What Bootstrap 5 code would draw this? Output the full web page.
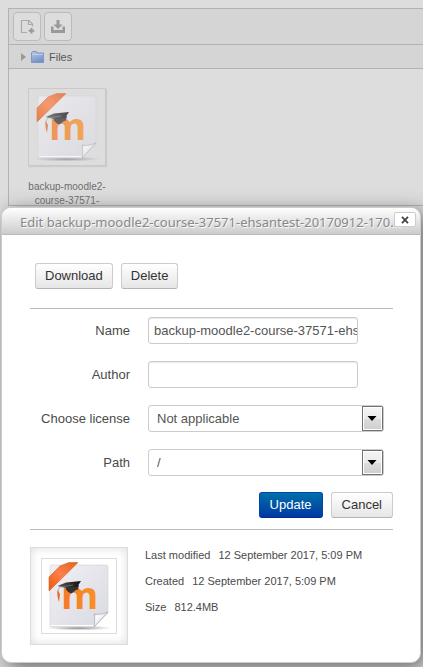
<!DOCTYPE html>
<html lang="en">
<head>
<meta charset="utf-8">
<meta name="viewport" content="width=device-width, initial-scale=1">
<title>Edit file</title>
<link href="https://cdn.jsdelivr.net/npm/bootstrap@5.3.0/dist/css/bootstrap.min.css" rel="stylesheet">
<style>
body{font-family:"Liberation Sans",Arial,sans-serif;font-size:13px;line-height:18px;color:#4a4a4a;background:#ddd}
.fm{margin:8px 0 0 8px;border:1px solid #b2b2b2;border-right:0;color:#6d6d6d}
.fm-bar{background:#d5d5d5;border-bottom:1px solid #b2b2b2}
.fm-tools{padding:3px 4px;gap:3px}
.fm-tool{width:28px;height:29px;padding:0;background:#ddd;border:1px solid #bbb;border-radius:4px;display:flex;align-items:center;justify-content:center}
.fm-path{height:24px;padding-left:12px;gap:5px;font-size:11px}
.fm-path a{color:#555;text-decoration:none}
.fm-files{padding:19px 14px 0;height:136px}
.fm-item{width:88px;font-size:10px;line-height:14px;color:#6d6d6d}
.fm-thumb{width:78px;height:78px;margin-bottom:14px;border:1px solid #c9c9c9;box-shadow:1px 1px 1px #ccc}
.fm-thumb svg{opacity:.72}
.dlg{top:207px;left:1px;right:2px;background:#fff;border:1px solid #ccc;border-radius:10px;box-shadow:5px 5px 20px #666}
.dlg-head{height:27px;padding:0 22px 0 18px;border-bottom:1px solid #bbb;border-radius:9px 9px 0 0;background:linear-gradient(#fff,#ccc)}
.dlg-title{font:400 13px/28px "Noto Sans","Open Sans",sans-serif;color:#888;margin:0;white-space:nowrap;text-shadow:1px 1px 1px #fff}
.dlg-close{top:4px;right:4px;width:22px;height:15px;padding:0;border:1px solid #ccc;border-radius:2px;background:#fff;display:flex;align-items:center;justify-content:center}
.dlg-body{padding:28px 27px 17px 28px}
.top-actions{padding:0 5px 19px}
.btn-ui{font-size:13px;line-height:18px;padding:3px 9px;border:1px solid #ccc;border-bottom-color:#b3b3b3;border-radius:3px;color:#333;background:linear-gradient(#fff,#e6e6e6)}
.form-actions .btn-ui{padding:3px 10px}
.btn-ui:hover{background:#e6e6e6}
.btn-save{color:#fff;border-color:#04a #04a #00308a;background:linear-gradient(#0070a8,#0037a4)}
.btn-save:hover{color:#fff;background:#0037a4}
.rule{height:1px;background:#bbb}
.frm{padding:8px 9px 0 0;display:grid;grid-template-columns:100px minmax(0,1fr);column-gap:18px;row-gap:17px;align-items:center}
.frm label{text-align:right}
.frm .form-control,.frm .form-select{font-size:13px;line-height:18px;height:27px;border:1px solid #ccc;border-radius:3px;color:#555}
.frm .form-control{width:210px;padding:3px 0 3px 5px;box-shadow:inset 0 1px 1px #e8e8e8}
.frm .form-select{padding:3px 26px 3px 8px;background:#fff url("data:image/svg+xml,%3Csvg xmlns='http://www.w3.org/2000/svg' width='21' height='25'%3E%3Cdefs%3E%3ClinearGradient id='g' x2='0' y2='1'%3E%3Cstop stop-color='%23f4f4f4'/%3E%3Cstop offset='.5' stop-color='%23ebebeb'/%3E%3Cstop offset='.51' stop-color='%23ddd'/%3E%3Cstop offset='1' stop-color='%23cfcfcf'/%3E%3C/linearGradient%3E%3C/defs%3E%3Crect x='.5' y='.5' width='20' height='24' fill='%23fff' stroke='%23707070'/%3E%3Crect x='2' y='2' width='17' height='21' fill='url(%23g)'/%3E%3Cpath d='M5.500 10h9l-4.500 5z'/%3E%3C/svg%3E") no-repeat right center;background-size:21px 25px}
.form-actions{padding:16px 0 11px}
.file-info{gap:17px;padding-top:17px}
.info-text{font-size:11px;line-height:16px;gap:10px}
.info-text dt{font-weight:400}
.preview{width:98px;height:98px;padding:10px;border:1px solid #ddd;box-shadow:inset 0 0 10px #ddd;background:#fff}
.preview-frame{width:76px;height:76px;border:1px solid #ddd;background:#fff}
</style>
<script src="https://cdn.jsdelivr.net/npm/bootstrap@5.3.0/dist/js/bootstrap.bundle.min.js"></script>
</head>
<body>
<div class="position-relative min-vh-100 overflow-hidden">
  <svg width="0" height="0" class="position-absolute" aria-hidden="true">
    <defs>
      <linearGradient id="paper" x2="1" y2="1"><stop stop-color="#f0f0f4"/><stop offset="1" stop-color="#d9d9e1"/></linearGradient>
      <linearGradient id="ribbon" x1="0" y1="1" x2="1" y2="0"><stop stop-color="#e8590c"/><stop offset=".5" stop-color="#ff7f4a"/><stop offset="1" stop-color="#e4621a"/></linearGradient>
      <linearGradient id="curl" x2="1" y2="1"><stop stop-color="#bbbbc6"/><stop offset=".25" stop-color="#fff"/><stop offset="1" stop-color="#c2c2cc"/></linearGradient>
      <linearGradient id="cap" x2="1"><stop stop-color="#555"/><stop offset="1" stop-color="#111"/></linearGradient>
      <linearGradient id="orange" x2="1"><stop stop-color="#f4792a"/><stop offset="1" stop-color="#f99325"/></linearGradient>
      <radialGradient id="ground"><stop stop-color="#555" stop-opacity=".7"/><stop offset="1" stop-color="#777" stop-opacity="0"/></radialGradient>
    </defs>
    <symbol id="mbz" viewBox="0 0 74 74">
      <ellipse cx="37" cy="69" rx="33" ry="2.500" fill="url(#ground)"/>
      <path d="M10 6H64q2 0 2 2V54L52 68H10q-2 0-2-2V8q0-2 2-2z" fill="url(#paper)" stroke="#d0d0d8" stroke-width=".6"/>
      <path d="M9 66.500H52" stroke="#fff" stroke-width="1"/>
      <path d="M52 68c1-5 1-9 0-13 5 1 9 0 14-2z" fill="url(#curl)" stroke="#a8a8b2" stroke-width=".7"/>
      <path d="M7 18 18 7 27 3.500H36L7 32z" fill="url(#ribbon)" stroke="#cd6228" stroke-width=".6"/>
      <text x="19" y="50" font-family="Open Sans,sans-serif" font-size="38" font-weight="700" fill="url(#orange)">m</text>
      <path d="M24 28 37 26 36 30.500c-3 0-4 3-7 4q-3-1-5-4z" fill="#333"/>
      <path d="M15.500 27 24 23.500 39 22 35 28 24 29z" fill="url(#cap)"/>
      <path d="M31 26 18 28q-2 1-2 6" fill="none" stroke="#888" stroke-width=".6"/>
      <path d="M15.500 31c-.5 4 0 8 1.500 12l1-8z" fill="#e96a32"/>
    </symbol>
  </svg>

  <main class="fm">
    <div class="fm-bar fm-tools d-flex">
      <button class="fm-tool" type="button" aria-label="Add file">
        <svg width="16" height="16" viewBox="0 0 16 16"><path d="M8 13.500H2.500V1.500H10L13.500 5V7.500M9.500 1.500V5.500H13.500" fill="none" stroke="#aaa" stroke-width="1.200"/><path d="M12.500 9v5.500M9.700 11.700h5.600" stroke="#999" stroke-width="2"/></svg>
      </button>
      <button class="fm-tool" type="button" aria-label="Download all">
        <svg width="16" height="16" viewBox="0 0 16 16" fill="#999"><path d="M6.500 1h3v4.500h3L8 10 3.500 5.500h3z"/><path d="M1 7.500h2.500V11h9V7.500H15V14H1z"/></svg>
      </button>
    </div>
    <nav class="fm-bar fm-path d-flex align-items-center" aria-label="Folder path">
      <svg width="5" height="8" viewBox="0 0 5 8"><path d="M0 0 5 4 0 8z" fill="#999"/></svg>
      <svg width="13" height="12" viewBox="0 0 13 12"><defs><linearGradient id="fold" x2=".4" y2="1"><stop stop-color="#b8c8e6"/><stop offset="1" stop-color="#7693c8"/></linearGradient></defs><path d="M.5 2 1.500.5h4L6.500 2h6v9.500H.5z" fill="url(#fold)" stroke="#7c96c8"/><path d="M1 3.500h11" stroke="#c2d0ea"/></svg>
      <a href="#">Files</a>
    </nav>
    <div class="fm-files">
      <div class="fm-item text-center text-nowrap">
        <div class="fm-thumb mx-auto d-flex align-items-center justify-content-center"><svg width="74" height="74"><use href="#mbz"/></svg></div>
        backup-moodle2-<br>course-37571-
      </div>
    </div>
  </main>

  <section class="dlg position-absolute" role="dialog" aria-labelledby="dlg-title">
    <header class="dlg-head">
      <h1 class="dlg-title" id="dlg-title">Edit backup-moodle2-course-37571-ehsantest-20170912-170...</h1>
      <button class="dlg-close position-absolute" type="button" aria-label="Close"><svg width="8" height="8" viewBox="0 0 8 8"><path d="M1 .8 7 7.200M7 .8 1 7.200" stroke="#444" stroke-width="1.800"/></svg></button>
    </header>
    <form class="dlg-body">
      <div class="top-actions d-flex gap-2">
        <button class="btn btn-ui" type="button">Download</button>
        <button class="btn btn-ui" type="button">Delete</button>
      </div>
      <div class="rule"></div>
      <div class="frm">
        <label for="f-name">Name</label>
        <input class="form-control" id="f-name" type="text" value="backup-moodle2-course-37571-ehsantest-20170912-1709.mbz">
        <label for="f-author">Author</label>
        <input class="form-control" id="f-author" type="text">
        <label for="f-license">Choose license</label>
        <select class="form-select" id="f-license"><option>Not applicable</option></select>
        <label for="f-path">Path</label>
        <select class="form-select" id="f-path"><option>/</option></select>
      </div>
      <div class="form-actions d-flex justify-content-end gap-2">
        <button class="btn btn-ui btn-save" type="button">Update</button>
        <button class="btn btn-ui" type="button">Cancel</button>
      </div>
      <div class="rule"></div>
      <div class="file-info d-flex">
        <div class="preview flex-shrink-0"><div class="preview-frame"><svg class="d-block" width="74" height="74"><use href="#mbz"/></svg></div></div>
        <dl class="info-text d-flex flex-column mb-0">
          <div class="d-flex gap-2"><dt>Last modified</dt><dd class="mb-0">12 September 2017, 5:09 PM</dd></div>
          <div class="d-flex gap-2"><dt>Created</dt><dd class="mb-0">12 September 2017, 5:09 PM</dd></div>
          <div class="d-flex gap-2"><dt>Size</dt><dd class="mb-0">812.4MB</dd></div>
        </dl>
      </div>
    </form>
  </section>
</div>
</body>
</html>
